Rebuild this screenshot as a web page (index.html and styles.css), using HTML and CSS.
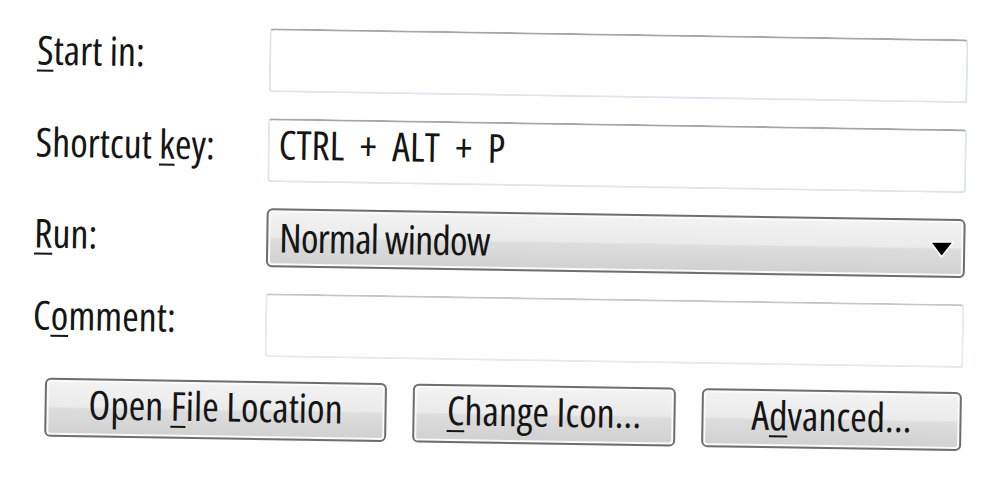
FILE: index.html
```html
<!DOCTYPE html>
<html lang="en">
<head>
  <meta charset="UTF-8" />
  <meta name="viewport" content="width=device-width, initial-scale=1.0" />
  <title>Shortcut properties</title>
  <link rel="stylesheet" href="styles.css">
</head>
<body>
  <section class="dialog">
    <form class="fields">
      <label class="label" for="start"><u>S</u>tart in:</label>
      <input class="field" id="start" type="text" value="" />

      <label class="label label-key" for="key">Shortcut <u>k</u>ey:</label>
      <input class="field field-key" id="key" type="text" value="CTRL + ALT + P" />

      <label class="label label-run"><u>R</u>un:</label>
      <div class="combo">
        <span class="combo-value">Normal window</span>
        <svg class="combo-arrow" width="25" height="17" viewBox="0 0 25 17">
          <polygon points="1,1 24,1 12.5,16" fill="#000" stroke="#fff" stroke-width="1.5" stroke-linejoin="round" />
        </svg>
      </div>

      <label class="label" for="comment">C<u>o</u>mment:</label>
      <input class="field field-comment" id="comment" type="text" value="" />
    </form>

    <div class="buttons">
      <button type="button" class="btn btn-open">Open <u>F</u>ile Location</button>
      <button type="button" class="btn btn-icon"><u>C</u>hange Icon...</button>
      <button type="button" class="btn btn-adv">A<u>d</u>vanced...</button>
    </div>
  </section>
</body>
</html>
```

FILE: styles.css
```css
body {
  margin: 0;
  background: #fff;
  font-family: 'Open Sans', 'Liberation Sans', sans-serif;
  font-stretch: 87.5%;
  font-size: 40px;
  line-height: 1.1;
  color: #151515;
}

/* the screenshot is tilted a little */
.dialog {
  padding: 24px 0 40px 38px;
  transform: rotate(0.9deg);
  transform-origin: 0 0;
}

.fields {
  display: grid;
  grid-template-columns: 232px 699px;
  grid-template-rows: 64px 64px 59px 64px;
  row-gap: 26px;
}

.label {
  padding-top: 3px;
}

.label-key {
  padding-top: 5px;
}

.label-run {
  padding-top: 6px;
}

u {
  text-decoration-thickness: 2px;
  text-underline-offset: 5px;
}

.field {
  box-sizing: border-box;
  width: 100%;
  height: 64px;
  margin: 0;
  padding: 0 9px 13px 9px;
  font: inherit;
  color: #151515;
  background: #fff;
  border: 2px solid #e0e4ec;
  border-top-color: #a4a6aa;
  border-radius: 4px;
  outline: none;
}

.field-key {
  word-spacing: 8px;
}

.field-comment {
  border-color: #c3c6cb #e6e9ef #e6e9ef #e6e9ef;
}

.combo {
  box-sizing: border-box;
  height: 59px;
  display: flex;
  align-items: center;
  justify-content: space-between;
  padding: 0 9px 2px 11px;
  border: 2px solid #6e6e6e;
  border-radius: 6px;
  box-shadow: inset 0 0 0 2px #fbfbfb;
  background: linear-gradient(#f3f3f3, #ebebeb 48%, #dddddd 52%, #d0d0d0);
}

.combo-value {
  letter-spacing: -0.8px;
}

.combo-arrow {
  margin-top: 4px;
}

.buttons {
  display: flex;
  gap: 26px;
  margin: 24px 0 0 13px;
}

.btn {
  box-sizing: border-box;
  height: 59px;
  padding: 0 0 7px 0;
  font: inherit;
  color: #151515;
  border: 2px solid #6e6e6e;
  border-radius: 6px;
  box-shadow: inset 0 0 0 2px #fbfbfb;
  background: linear-gradient(#f3f3f3, #ebebeb 48%, #dddddd 52%, #d0d0d0);
}

.btn-open {
  width: 342px;
}

.btn-icon {
  width: 263px;
}

.btn-adv {
  width: 260px;
}
```
